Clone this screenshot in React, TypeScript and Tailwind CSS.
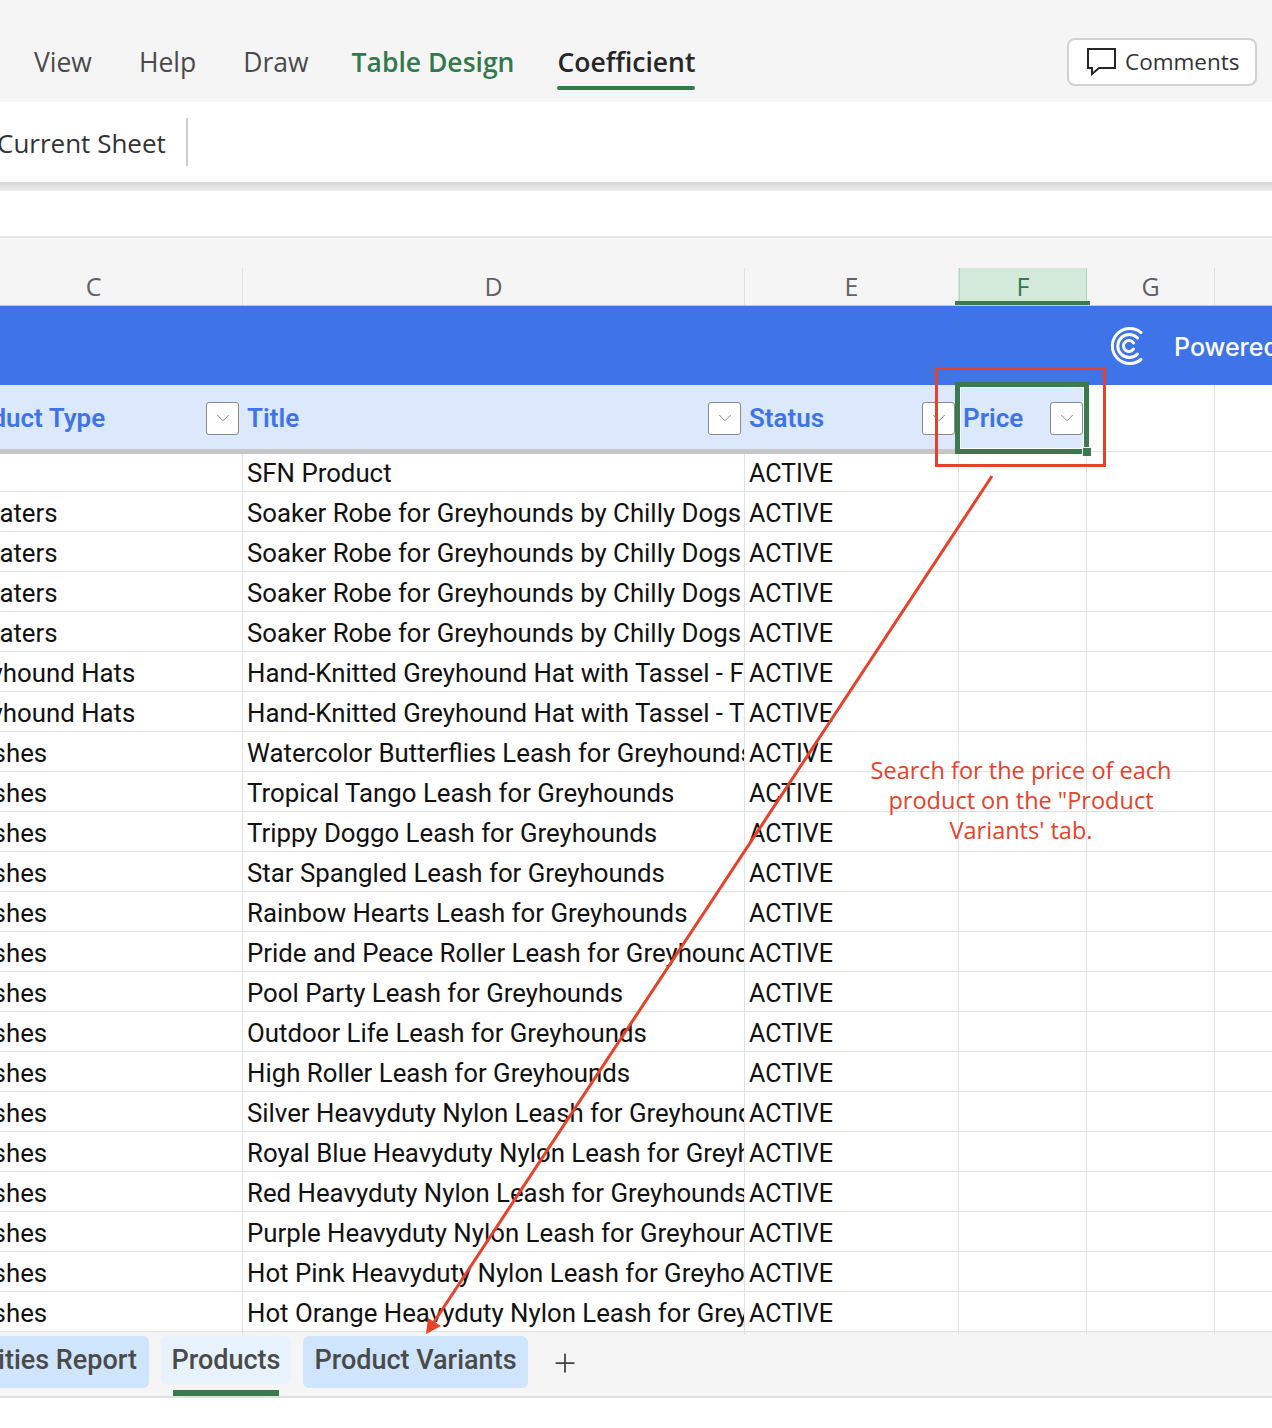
import { ChevronDown, Plus } from "lucide-react";

const grid = "grid grid-cols-[243px_502px_214px_128px_128px_57px]";

const rows: [string, string][] = [
  ["", "SFN Product"],
  ["Sweaters", "Soaker Robe for Greyhounds by Chilly Dogs"],
  ["Sweaters", "Soaker Robe for Greyhounds by Chilly Dogs"],
  ["Sweaters", "Soaker Robe for Greyhounds by Chilly Dogs"],
  ["Sweaters", "Soaker Robe for Greyhounds by Chilly Dogs"],
  ["Greyhound Hats", "Hand-Knitted Greyhound Hat with Tassel - Fawn"],
  ["Greyhound Hats", "Hand-Knitted Greyhound Hat with Tassel - Tan"],
  ["Leashes", "Watercolor Butterflies Leash for Greyhounds"],
  ["Leashes", "Tropical Tango Leash for Greyhounds"],
  ["Leashes", "Trippy Doggo Leash for Greyhounds"],
  ["Leashes", "Star Spangled Leash for Greyhounds"],
  ["Leashes", "Rainbow Hearts Leash for Greyhounds"],
  ["Leashes", "Pride and Peace Roller Leash for Greyhounds"],
  ["Leashes", "Pool Party Leash for Greyhounds"],
  ["Leashes", "Outdoor Life Leash for Greyhounds"],
  ["Leashes", "High Roller Leash for Greyhounds"],
  ["Leashes", "Silver Heavyduty Nylon Leash for Greyhounds"],
  ["Leashes", "Royal Blue Heavyduty Nylon Leash for Greyhounds"],
  ["Leashes", "Red Heavyduty Nylon Leash for Greyhounds"],
  ["Leashes", "Purple Heavyduty Nylon Leash for Greyhounds"],
  ["Leashes", "Hot Pink Heavyduty Nylon Leash for Greyhounds"],
  ["Leashes", "Hot Orange Heavyduty Nylon Leash for Greyhounds"],
];

function FilterButton() {
  return (
    <div className="flex h-[33px] w-[33px] shrink-0 items-center justify-center rounded-[3px] border border-[#8a8a8a] bg-white">
      <ChevronDown className="h-[22px] w-[22px] text-[#777777]" strokeWidth={1} />
    </div>
  );
}

function ColumnLetter({ letter, className = "" }: { letter: string; className?: string }) {
  return (
    <div className={`flex h-[37px] items-center justify-center border-r border-[#e0e0e0] text-[25px] text-[#616161] ${className}`}>
      {letter}
    </div>
  );
}

function CoefficientLogo() {
  return (
    <svg className="shrink-0" width="38" height="40" viewBox="0 0 38 40" fill="none" stroke="white" strokeLinecap="round">
      <path d="M33 6.5A17.5 17.5 0 1 0 33 33.5" strokeWidth="3" />
      <path d="M29.5 12A11.5 11.5 0 1 0 29.5 28" strokeWidth="3" />
      <path d="M25.5 17A5.5 5.5 0 1 0 25.5 23" strokeWidth="3" />
    </svg>
  );
}

export default function App() {
  return (
    <div className="relative h-[1428px] w-[1272px] overflow-hidden bg-white font-['Open_Sans',sans-serif]">
      {/* menu tabs */}
      <div className="flex h-[102px] items-start justify-between bg-[#f5f5f5]">
        <div className="flex gap-[47px] pl-[34px] pt-[44px] text-[26.5px] leading-[37px] text-[#4a4a4a]">
          <span>View</span>
          <span>Help</span>
          <span>Draw</span>
          <span className="-ml-[4px] font-semibold text-[#33794b]">Table Design</span>
          <span className="relative -ml-[4px] font-semibold text-[#262626]">
            Coefficient
            <span className="absolute left-0 right-0 top-[42px] h-[4px] rounded-full bg-[#33794b]" />
          </span>
        </div>
        <div className="mr-[15px] mt-[38px] flex h-[48px] w-[190px] items-center gap-[9px] rounded-lg border-2 border-[#d1d1d1] bg-white pl-[18px] text-[22.5px] text-[#333333]">
          <svg width="29" height="28" viewBox="0 0 29 28" fill="none" stroke="#262626" strokeWidth="2">
            <path d="M1 1H28V20H12L5 26V20H1Z" />
          </svg>
          <span>Comments</span>
        </div>
      </div>

      {/* ribbon */}
      <div className="flex h-[80px] items-center bg-white">
        <span className="ml-[-3px] mt-[3px] text-[26px] text-[#333333]">Current Sheet</span>
        <div className="ml-[20px] h-[48px] w-[2px] bg-[#cccccc]" />
      </div>
      <div className="h-[9px] bg-gradient-to-b from-[#d6d6d6] to-[#ececec]" />

      {/* formula bar */}
      <div className="h-[45px] bg-white" />
      <div className="h-[2px] bg-[#e6e6e6]" />

      {/* column letters */}
      <div className="h-[30px] bg-[#f5f5f5]" />
      <div className={`${grid} h-[37px] bg-[#f5f5f5]`}>
        <ColumnLetter letter="C" className="pr-[55px]" />
        <ColumnLetter letter="D" />
        <ColumnLetter letter="E" />
        <div className="relative flex h-[37px] items-center justify-center border-x border-[#a9d8b9] bg-[#d3e9da] text-[25px] text-[#33794b]">
          F
          <span className="absolute -left-[5px] -right-[4px] bottom-0 h-[4px] bg-[#3a7a4c]" />
        </div>
        <ColumnLetter letter="G" />
        <div className="h-[37px]" />
      </div>
      <div className="h-px bg-[#c8c8c8]" />

      {/* banner */}
      <div className="flex h-[79px] items-center overflow-hidden whitespace-nowrap bg-[#3f74e8] pl-[1108px] text-[25px] font-medium text-white">
        <CoefficientLogo />
        <span className="ml-[28px] shrink-0 pt-[4px] font-['Inter',sans-serif]">Powered by Coefficient</span>
      </div>

      {/* table */}
      <div className="font-['Roboto',sans-serif]">
        <div className={`${grid} h-[69px]`}>
          <div className="flex h-[64px] items-center justify-between overflow-hidden bg-[#dce9fc] pr-[4px] pt-[2px]">
            <span className="-ml-[49px] whitespace-nowrap text-[26px] font-semibold text-[#3f74e8]">Product Type</span>
            <FilterButton />
          </div>
          <div className="flex h-[64px] items-center justify-between bg-[#dce9fc] pl-[4px] pr-[4px] pt-[2px]">
            <span className="text-[26px] font-semibold text-[#3f74e8]">Title</span>
            <FilterButton />
          </div>
          <div className="flex h-[64px] items-center justify-between bg-[#dce9fc] pl-[4px] pr-[4px] pt-[2px]">
            <span className="text-[26px] font-semibold text-[#3f74e8]">Status</span>
            <FilterButton />
          </div>
          <div className="flex h-[64px] items-center justify-between bg-[#dce9fc] pl-[4px] pr-[4px] pt-[2px]">
            <span className="text-[26px] font-semibold text-[#3f74e8]">Price</span>
            <FilterButton />
          </div>
          <div className="border-r border-[#e1e1e1]">
            <div className="h-[67px] border-b border-[#e1e1e1]" />
          </div>
          <div>
            <div className="h-[67px] border-b border-[#e1e1e1]" />
          </div>
        </div>
        <div className="-mt-[5px] h-[5px] w-[959px] bg-[#c6c6c6]" />

        {rows.map(([type, title], i) => (
          <div
            key={i}
            className={`${grid} ${i === 0 ? "h-[38px] leading-[39px]" : "h-[40px] leading-[42px]"} border-b border-[#e1e1e1] text-[25.8px] text-[#111111]`}
          >
            <div className="overflow-hidden whitespace-nowrap border-r border-[#e1e1e1]">
              <span className="ml-[-49px]">{type}</span>
            </div>
            <div className="overflow-hidden whitespace-nowrap border-r border-[#e1e1e1] pl-[4px]">{title}</div>
            <div className={`border-r border-[#e1e1e1] pl-[4px] text-[25px] ${i === 0 ? "" : "pt-px"}`}>ACTIVE</div>
            <div className="border-r border-[#e1e1e1]" />
            <div className="border-r border-[#e1e1e1]" />
            <div />
          </div>
        ))}
      </div>

      {/* sheet tabs */}
      <div className="flex h-[64px] items-start gap-[12px] bg-[#f5f5f5] pt-[4px] font-['Roboto',sans-serif] text-[27px] font-medium text-[#4a4a4a]">
        <div className="flex h-[52px] w-[149px] items-center justify-end overflow-hidden whitespace-nowrap rounded-r-md bg-[#cfe5fb] pb-[4px] pr-[12px]">
          Activities Report
        </div>
        <div className="relative flex h-[48px] w-[130px] items-center justify-center rounded-md bg-[#e8f2fc]">
          Products
          <span className="absolute bottom-[-12px] left-[12px] right-[12px] h-[6px] bg-[#3a7a4c]" />
        </div>
        <div className="flex h-[52px] w-[225px] items-center justify-center rounded-md bg-[#cfe5fb] pb-[4px]">Product Variants</div>
        <Plus className="ml-[10px] mt-[12px] h-[30px] w-[30px] text-[#404040]" strokeWidth={1.4} />
      </div>
      <div className="h-[2px] bg-[#e0e0e0]" />

      {/* selected cell */}
      <div className="absolute left-[955px] top-[382px] h-[72px] w-[134px] border-[5px] border-[#3a7a4c] shadow-[inset_0_0_0_1px_white]" />
      <div className="absolute left-[1082px] top-[447px] h-[10px] w-[10px] border border-white bg-[#3a7a4c]" />

      {/* annotation */}
      <div className="absolute left-[935px] top-[367px] h-[100px] w-[171px] border-[3px] border-[#e8412a]" />
      <svg className="absolute left-0 top-0" width="1272" height="1428" fill="none">
        <line x1="992" y1="476" x2="432" y2="1325" stroke="#e8412a" strokeWidth="3" />
        <polygon points="426,1334 428,1318 441,1326" fill="#e8412a" />
      </svg>
      <div className="absolute left-[860px] top-[755px] w-[322px] text-center text-[23.5px] leading-[30px] text-[#e8412a]">
        Search for the price of each
        <br />
        product on the "Product
        <br />
        Variants' tab.
      </div>
    </div>
  );
}
